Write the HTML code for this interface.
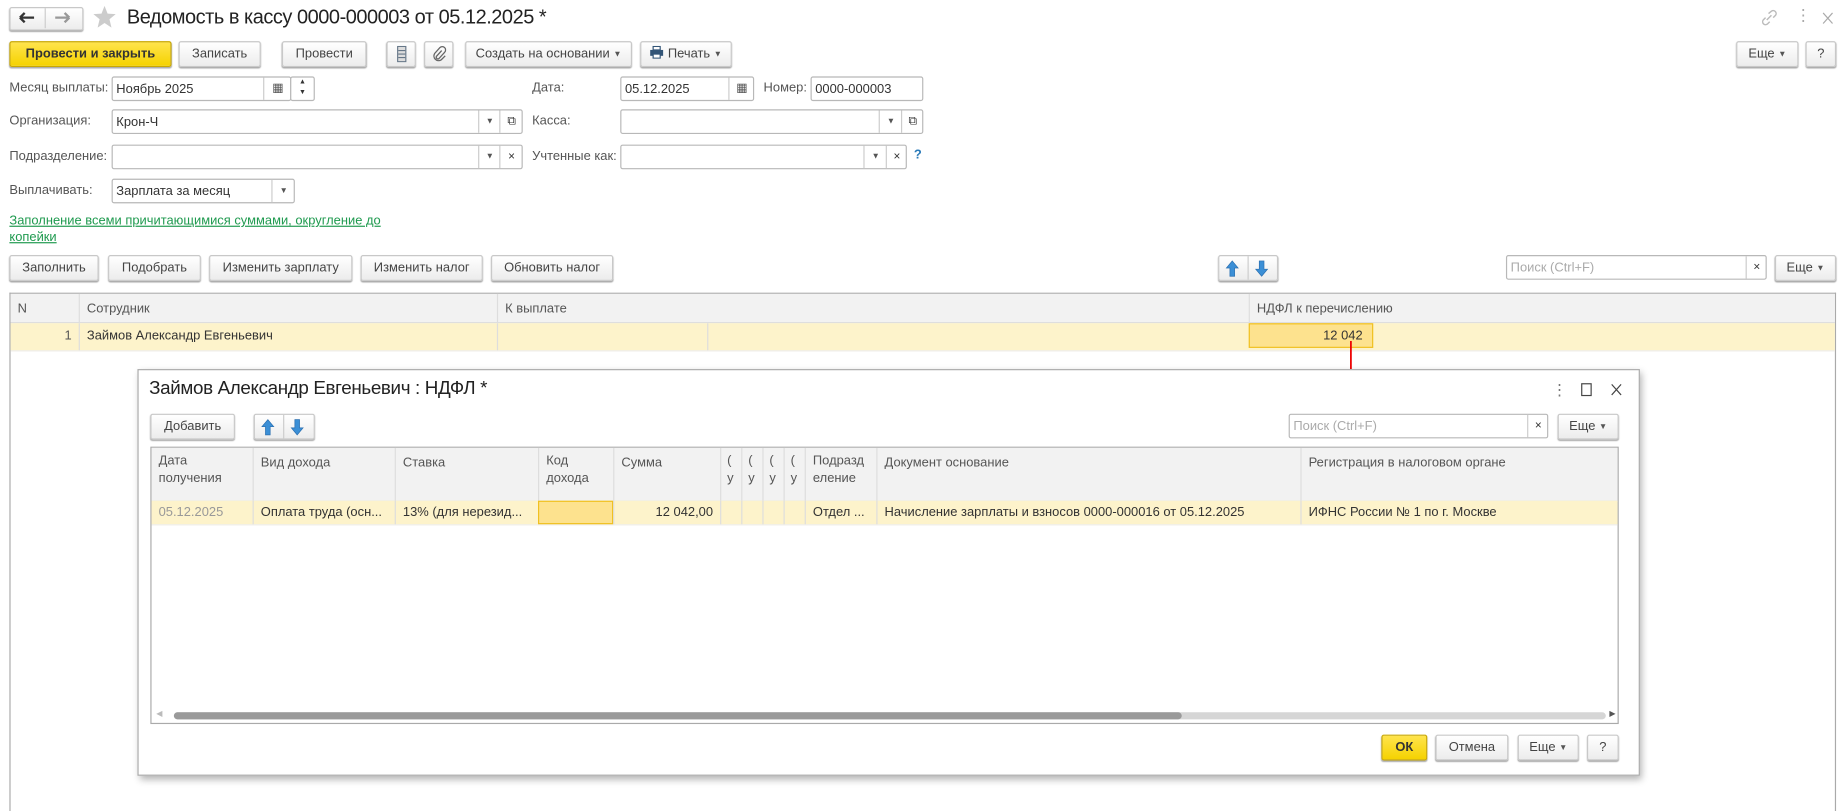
<!DOCTYPE html>
<html><head><meta charset="utf-8"><style>
html,body{margin:0;padding:0;background:#fff;overflow:hidden;width:1842px;height:804px}
#w{position:absolute;left:0;top:0;width:1568px;height:684px;transform:scale(1.1747,1.1754);transform-origin:0 0;font-family:"Liberation Sans",Arial,sans-serif;font-size:11px;color:#333}
.a{position:absolute}
.b{position:absolute;height:20px;border:1px solid #c8c8c8;border-radius:2px;background:linear-gradient(#fff,#ececec);box-shadow:0 1px 1px #aaa;text-align:center;line-height:20px;color:#444;box-sizing:content-box;white-space:nowrap}
.y{background:linear-gradient(#ffe44d,#f5d200);border-color:#c9a800;color:#333}
.i{position:absolute;height:21px;border:1px solid #b8b8b8;border-radius:2px;background:#fff;line-height:20px;padding-left:3px;box-sizing:border-box}
.l{position:absolute;color:#555;line-height:21px}
.h{position:absolute;background:#f2f2f2;border-bottom:1px solid #ddd}
.c{position:absolute;border-left:1px solid #ddd;padding:4px 6px;box-sizing:border-box;color:#555;line-height:18px;height:100%;white-space:nowrap;overflow:hidden}
.r{position:absolute;background:#fdf3cb;border-bottom:1px solid #eee}
.dd{font-size:7px;color:#555;vertical-align:1px}
</style></head><body><div id="w">
<svg width="0" height="0" style="position:absolute"><defs>
<g id="up"><path d="M6 1L11 7H8V14H4V7H1Z" fill="#3b8fd6" stroke="#2a6fb0" stroke-width=".6"/></g>
<g id="dn"><path d="M6 14L11 8H8V1H4V8H1Z" fill="#3b8fd6" stroke="#2a6fb0" stroke-width=".6"/></g>
</defs></svg>
<!-- top -->
<div class="b" style="left:8px;top:6px;width:61px;height:18px;line-height:18px"></div>
<div class="a" style="left:38px;top:7px;width:1px;height:17px;background:#ccc"></div>
<svg class="a" style="left:16px;top:10px" width="14" height="10"><path d="M1 5H13M1 5L5 1M1 5L5 9" stroke="#333" stroke-width="2" fill="none"/></svg>
<svg class="a" style="left:46px;top:10px" width="14" height="10"><path d="M1 5H13M13 5L9 1M13 5L9 9" stroke="#999" stroke-width="2" fill="none"/></svg>
<svg class="a" style="left:79px;top:5px" width="20" height="19"><path d="M10 0L12.6 6.6L19.5 7L14.2 11.4L15.9 18.5L10 14.6L4.1 18.5L5.8 11.4L0.5 7L7.4 6.6Z" fill="#ccc"/></svg>
<div class="a" style="left:108px;top:5px;font-size:17px;color:#222;letter-spacing:-0.4px">Ведомость в кассу 0000-000003 от 05.12.2025 *</div>
<svg class="a" style="left:1499px;top:8px" width="14" height="14"><path d="M5 9L9 5M4 7L2 9a2.5 2.5 0 0 0 3.5 3.5L7.5 10.5M6.5 3.5L9 1.5a2.5 2.5 0 0 1 3.5 3.5L10.5 7" stroke="#bbb" stroke-width="1.2" fill="none"/></svg>
<div class="a" style="left:1528px;top:5px;color:#aaa;font-size:14px">⋮</div>
<svg class="a" style="left:1551px;top:10px" width="10" height="11"><path d="M1 1L9 10M9 1L1 10" stroke="#aaa" stroke-width="1"/></svg>
<!-- toolbar -->
<div class="b y" style="left:8px;top:35px;width:136px;font-weight:bold">Провести и закрыть</div>
<div class="b" style="left:152px;top:35px;width:68px">Записать</div>
<div class="b" style="left:240px;top:35px;width:70px">Провести</div>
<div class="b" style="left:329px;top:35px;width:23px"><svg width="8" height="14" style="vertical-align:middle"><rect x="0.5" y="0.5" width="7" height="13" fill="#ddd" stroke="#678"/><path d="M1 4h6M1 7h6M1 10h6" stroke="#678"/></svg></div>
<div class="b" style="left:361px;top:35px;width:23px"><svg width="12" height="14" style="vertical-align:middle"><path d="M8 4L3.5 9a1.5 1.5 0 0 0 2 2L10.5 5.5a2.8 2.8 0 0 0-4-4L2 6.5a4 4 0 0 0 5.5 5.5L11 8.5" stroke="#666" stroke-width="1.1" fill="none"/></svg></div>
<div class="b" style="left:396px;top:35px;width:140px">Создать на основании <span class="dd">▼</span></div>
<div class="b" style="left:545px;top:35px;width:76px"><svg width="12" height="11" style="vertical-align:-1px"><rect x="3" y="0.5" width="6" height="3" fill="#fff" stroke="#357"/><rect x="0.5" y="3.5" width="11" height="5" fill="#357"/><rect x="3" y="7" width="6" height="3.5" fill="#fff" stroke="#357"/></svg> Печать <span class="dd">▼</span></div>
<div class="b" style="left:1478px;top:35px;width:51px">Еще <span class="dd">▼</span></div>
<div class="b" style="left:1537px;top:35px;width:24px">?</div>
<!-- fields -->
<div class="l" style="left:8px;top:65px">Месяц выплаты:</div>
<div class="i" style="left:95px;top:65px;width:153px">Ноябрь 2025</div>
<div class="a" style="left:224px;top:66px;width:23px;height:19px;border-left:1px solid #ccc;line-height:19px;font-size:10px;text-align:center;color:#555">▦</div>
<div class="i" style="left:247px;top:65px;width:21px;font-size:6px;line-height:9px;text-align:center;padding:0">▲<br>▼</div>
<div class="l" style="left:453px;top:65px">Дата:</div>
<div class="i" style="left:528px;top:65px;width:114px">05.12.2025</div>
<div class="a" style="left:620px;top:66px;width:21px;height:19px;border-left:1px solid #ccc;text-align:center;line-height:19px;font-size:10px;color:#555">▦</div>
<div class="l" style="left:650px;top:65px">Номер:</div>
<div class="i" style="left:690px;top:65px;width:96px">0000-000003</div>

<div class="l" style="left:8px;top:93px">Организация:</div>
<div class="i" style="left:95px;top:93px;width:350px">Крон-Ч</div>
<div class="a dd" style="left:407px;top:94px;width:18px;height:19px;border-left:1px solid #ccc;text-align:center;line-height:19px">▼</div>
<div class="a" style="left:425px;top:94px;width:19px;height:19px;border-left:1px solid #ccc;text-align:center;line-height:19px;font-size:10px">⧉</div>
<div class="l" style="left:453px;top:93px">Касса:</div>
<div class="i" style="left:528px;top:93px;width:258px"></div>
<div class="a dd" style="left:748px;top:94px;width:19px;height:19px;border-left:1px solid #ccc;text-align:center;line-height:19px">▼</div>
<div class="a" style="left:767px;top:94px;width:18px;height:19px;border-left:1px solid #ccc;text-align:center;line-height:19px;font-size:10px">⧉</div>

<div class="l" style="left:8px;top:123px">Подразделение:</div>
<div class="i" style="left:95px;top:123px;width:350px"></div>
<div class="a dd" style="left:407px;top:124px;width:18px;height:19px;border-left:1px solid #ccc;text-align:center;line-height:19px">▼</div>
<div class="a" style="left:425px;top:124px;width:19px;height:19px;border-left:1px solid #ccc;text-align:center;line-height:19px;font-size:10px">×</div>
<div class="l" style="left:453px;top:123px">Учтенные как:</div>
<div class="i" style="left:528px;top:123px;width:244px"></div>
<div class="a dd" style="left:735px;top:124px;width:19px;height:19px;border-left:1px solid #ccc;text-align:center;line-height:19px">▼</div>
<div class="a" style="left:754px;top:124px;width:17px;height:19px;border-left:1px solid #ccc;text-align:center;line-height:19px;font-size:10px">×</div>
<div class="a" style="left:778px;top:126px;color:#2a7ab8;font-weight:bold">?</div>

<div class="l" style="left:8px;top:152px">Выплачивать:</div>
<div class="i" style="left:95px;top:152px;width:156px">Зарплата за месяц</div>
<div class="a dd" style="left:231px;top:153px;width:19px;height:19px;border-left:1px solid #ccc;text-align:center;line-height:19px">▼</div>

<div class="a" style="left:8px;top:181px;color:#1f9a4f;text-decoration:underline;line-height:14px">Заполнение всеми причитающимися суммами, округление до<br>копейки</div>

<div class="b" style="left:8px;top:217px;width:74px">Заполнить</div>
<div class="b" style="left:92px;top:217px;width:77px">Подобрать</div>
<div class="b" style="left:178px;top:217px;width:120px">Изменить зарплату</div>
<div class="b" style="left:307px;top:217px;width:102px">Изменить налог</div>
<div class="b" style="left:418px;top:217px;width:102px">Обновить налог</div>
<div class="b" style="left:1037px;top:217px;width:49px"></div>
<div class="a" style="left:1062px;top:218px;width:1px;height:20px;background:#ccc"></div>
<svg class="a" style="left:1043px;top:221px" width="12" height="15"><use href="#up"/></svg>
<svg class="a" style="left:1068px;top:221px" width="12" height="15"><use href="#dn"/></svg>
<div class="i" style="left:1282px;top:217px;width:222px;color:#aaa">Поиск (Ctrl+F)</div>
<div class="a" style="left:1486px;top:218px;width:17px;height:19px;border-left:1px solid #ccc;text-align:center;line-height:19px;font-size:10px">×</div>
<div class="b" style="left:1511px;top:217px;width:50px">Еще <span class="dd">▼</span></div>

<!-- main table -->
<div class="a" style="left:8px;top:249px;width:1553px;height:440px;border:1px solid #aaa;border-bottom:none"></div>
<div class="h" style="left:9px;top:250px;width:1553px;height:24px">
<div class="c" style="left:0;width:58px;border:none">N</div>
<div class="c" style="left:58px;width:356px">Сотрудник</div>
<div class="c" style="left:414px;width:640px">К выплате</div>
<div class="c" style="left:1054px;width:499px">НДФЛ к перечислению</div>
</div>
<div class="r" style="left:9px;top:275px;width:1553px;height:23px">
<div class="c" style="left:0;width:58px;border:none;text-align:right;padding-top:2px">1</div>
<div class="c" style="left:58px;width:356px;padding-top:2px;color:#333">Займов Александр Евгеньевич</div>
<div class="c" style="left:414px;width:179px"></div>
<div class="c" style="left:593px;width:461px"></div>
<div class="a" style="left:1054px;top:0;width:106px;height:21px;background:#fde28e;border:1px solid #f0c020;text-align:right;line-height:21px;padding-right:8px;box-sizing:border-box;color:#333">12 042</div>
</div>
<svg class="a" style="left:1145px;top:290px" width="10" height="42"><path d="M5 0V34" stroke="#e00" stroke-width="1.5"/><path d="M1 32L5 41L9 32Z" fill="#e00"/></svg>

<!-- dialog -->
<div class="a" style="left:117px;top:314px;width:1277px;height:344px;background:#fff;border:1px solid #aaa;box-shadow:2px 3px 6px rgba(0,0,0,.3)"></div>
<div class="a" style="left:127px;top:322px;font-size:16px;color:#222;letter-spacing:-0.3px">Займов Александр Евгеньевич : НДФЛ *</div>
<div class="a" style="left:1321px;top:324px;color:#777;font-size:13px">⋮</div>
<div class="a" style="left:1346px;top:326px;width:7px;height:9px;border:1px solid #444"></div>
<svg class="a" style="left:1371px;top:326px" width="10" height="11"><path d="M1 1L9 10M9 1L1 10" stroke="#444" stroke-width="1"/></svg>
<div class="b" style="left:128px;top:352px;width:70px">Добавить</div>
<div class="b" style="left:216px;top:352px;width:50px"></div>
<div class="a" style="left:241px;top:353px;width:1px;height:20px;background:#ccc"></div>
<svg class="a" style="left:222px;top:356px" width="12" height="15"><use href="#up"/></svg>
<svg class="a" style="left:247px;top:356px" width="12" height="15"><use href="#dn"/></svg>
<div class="i" style="left:1097px;top:352px;width:221px;color:#aaa">Поиск (Ctrl+F)</div>
<div class="a" style="left:1300px;top:353px;width:17px;height:19px;border-left:1px solid #ccc;text-align:center;line-height:19px;font-size:10px">×</div>
<div class="b" style="left:1326px;top:352px;width:50px">Еще <span class="dd">▼</span></div>

<div class="a" style="left:128px;top:380px;width:1248px;height:234px;border:1px solid #aaa"></div>
<div class="h" style="left:129px;top:381px;width:1248px;height:45px;line-height:15px">
<div class="c" style="left:0;width:86px;border:none;white-space:normal;line-height:15px">Дата получения</div>
<div class="c" style="left:86px;width:121px">Вид дохода</div>
<div class="c" style="left:207px;width:122px">Ставка</div>
<div class="c" style="left:329px;width:64px;white-space:normal;line-height:15px">Код дохода</div>
<div class="c" style="left:393px;width:91px">Сумма</div>
<div class="c" style="left:484px;width:18px;padding:4px 5px;line-height:15px">(<br>у</div>
<div class="c" style="left:502px;width:18px;padding:4px 5px;line-height:15px">(<br>у</div>
<div class="c" style="left:520px;width:18px;padding:4px 5px;line-height:15px">(<br>у</div>
<div class="c" style="left:538px;width:18px;padding:4px 5px;line-height:15px">(<br>у</div>
<div class="c" style="left:556px;width:61px;white-space:normal;line-height:15px">Подразд еление</div>
<div class="c" style="left:617px;width:361px">Документ основание</div>
<div class="c" style="left:978px;width:270px">Регистрация в налоговом органе</div>
</div>
<div class="r" style="left:129px;top:426px;width:1248px;height:20px">
<div class="c" style="left:0;width:86px;border:none;color:#999;padding-top:1px">05.12.2025</div>
<div class="c" style="left:86px;width:121px;padding-top:1px;color:#333">Оплата труда (осн...</div>
<div class="c" style="left:207px;width:122px;padding-top:1px;color:#333">13% (для нерезид...</div>
<div class="a" style="left:329px;top:0;width:64px;height:20px;background:#fde28e;border:1px solid #f0c020;box-sizing:border-box"></div>
<div class="c" style="left:393px;width:91px;padding-top:1px;text-align:right;color:#333">12 042,00</div>
<div class="c" style="left:484px;width:18px"></div><div class="c" style="left:502px;width:18px"></div><div class="c" style="left:520px;width:18px"></div><div class="c" style="left:538px;width:18px"></div>
<div class="c" style="left:556px;width:61px;padding-top:1px;color:#333">Отдел ...</div>
<div class="c" style="left:617px;width:361px;padding-top:1px;color:#333">Начисление зарплаты и взносов 0000-000016 от 05.12.2025</div>
<div class="c" style="left:978px;width:270px;padding-top:1px;color:#333">ИФНС России № 1 по г. Москве</div>
</div>
<div class="a" style="left:148px;top:606px;width:1219px;height:6px;background:#d6d6d6;border-radius:3px"></div>
<div class="a" style="left:148px;top:606px;width:858px;height:6px;background:#9a9a9a;border-radius:3px"></div>
<div class="a" style="left:133px;top:603px;font-size:7px;color:#bbb">◀</div>
<div class="a" style="left:1370px;top:603px;font-size:7px;color:#555">▶</div>

<div class="b y" style="left:1176px;top:625px;width:37px;font-weight:bold">ОК</div>
<div class="b" style="left:1222px;top:625px;width:60px">Отмена</div>
<div class="b" style="left:1292px;top:625px;width:50px">Еще <span class="dd">▼</span></div>
<div class="b" style="left:1351px;top:625px;width:25px">?</div>
</div></body></html>
